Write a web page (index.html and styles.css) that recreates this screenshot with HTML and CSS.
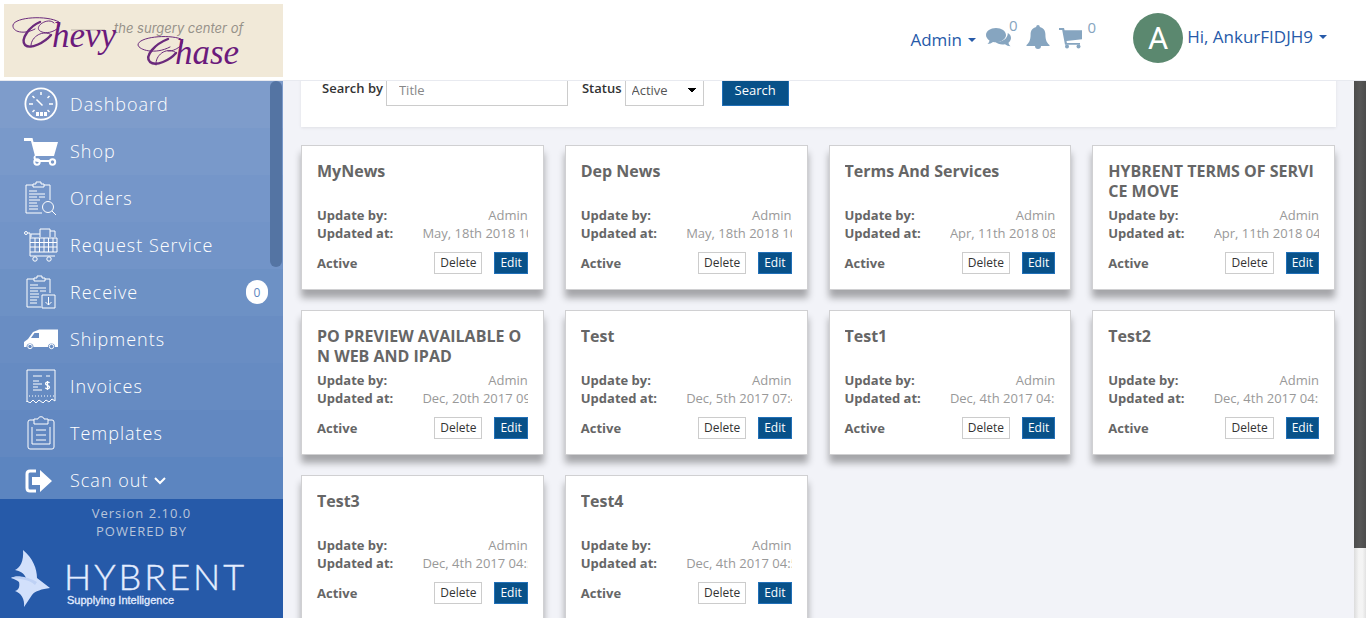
FILE: index.html
```html
<!DOCTYPE html>
<html lang="en">
<head>
<meta charset="utf-8">
<title>Hybrent - News</title>
<link rel="stylesheet" href="styles.css">
</head>
<body>
<div class="app">
  <aside class="sidebar">
    <a class="brand" href="#" aria-label="Chevy Chase">
      <svg class="brand-art" viewBox="0 0 279 73" preserveAspectRatio="none">
        <rect width="279" height="73" fill="#f1e9d8"/>
        <path d="M67 26H101" stroke="#b9b2a6" stroke-width="1"/>
        <text class="brand-small" x="110" y="29">the surgery center of</text>
        <g fill="none" stroke="#6b2a7c" stroke-linecap="round">
          <path d="M31 25C20 31 8 28 9 21C11 13 43 11 55 18C59 23 47 31 38 28C27 24 44 12 50 19" stroke-width="1"/>
          <path d="M36 18C26 22 16 35 21 41C27 46 41 38 47 31" stroke-width="2.4"/>
          <path d="M27 43C26 34 37 26 46 30" stroke-width="1"/>
          <path d="M166 43C151 51 135 46 134 41C134 33 164 30 177 35C183 39 171 48 164 47" stroke-width="1"/>
          <path d="M164 35C151 40 140 52 146 58C152 63 166 56 172 49" stroke-width="2.4"/>
          <path d="M152 61C151 51 162 43 171 48" stroke-width="1"/>
        </g>
        <text class="brand-script" x="48" y="43">hevy</text>
        <text class="brand-script" x="171" y="60">hase</text>
      </svg>
    </a>
    <nav class="menu">
      <a class="item" href="#"><svg class="ico" viewBox="0 0 34 34"><circle cx="17" cy="17" r="15.6" stroke-width="1.8"/><path stroke-width="1.5" d="M17 5v3M5 17h4M25 17h4M8.500 9l2 2M25.500 9l-2 2M8.500 25l2-2M25.500 25l-2-2M12.500 12.500l6 6"/><path class="fill" d="M12 25h3v4h-3zM16 25h3v4h-3zM20 25h3v4h-3z"/></svg><span>Dashboard</span></a>
      <a class="item" href="#"><svg class="ico" viewBox="0 0 34 34"><path class="fill" d="M0 4h8.500l1 4H34l-4 14H11L7 7H0z"/><path stroke-width="2" d="M11 22c-1 2 0 5 3 5h12"/><circle cx="13" cy="28" r="2.700" stroke-width="2"/><circle cx="28.500" cy="28" r="2.700" stroke-width="2"/></svg><span>Shop</span></a>
      <a class="item" href="#"><svg class="ico" viewBox="0 0 34 34"><path d="M9 4H2v28h16M20 4h6v15M9 3h3V1h5v2h3v3H9zM5 10h8M5 13h16M5 16h8M15 16h6M5 19h11M5 22h8M5 25h9M5 28h9"/><circle cx="24" cy="26" r="5.500"/><path d="M28 30l4 4"/></svg><span>Orders</span></a>
      <a class="item" href="#"><svg class="ico" viewBox="0 0 34 34"><circle cx="2" cy="5" r="1.500"/><path d="M4 5h2v23h25M6 10h27v14H6M6 14.500h27M6 19h27M11 10v14M15.500 10v14M20 10v14M24.500 10v14M29 10v14M7 9V6h9M16 9V1h10v8M26 3h5v6"/><circle cx="11" cy="31" r="2.200"/><circle cx="25" cy="31" r="2.200"/></svg><span>Request Service</span></a>
      <a class="item" href="#"><svg class="ico" viewBox="0 0 34 34"><path d="M10 4H3v28h14M21 4h5v14M10 3h3V1h5v2h3v3H10zM6 10h8M6 13h16M6 16h8M16 16h6M6 19h9M6 22h9M6 25h7M6 28h7M18 20h13v13H18zM24.500 22v8M21.500 27l3 3 3-3"/></svg><span>Receive</span><span class="count">0</span></a>
      <a class="item" href="#"><svg class="ico" viewBox="0 0 34 34"><path class="fill" fill-rule="evenodd" d="M15 7.500h19V25h-3a3.500 3.500 0 0 0-7 0H9.500a3.500 3.500 0 0 0-7 0H0v-5l4-3 5-7 5-2zM7 16h8v-5h-4.500z"/><circle cx="6" cy="24.500" r="2.200"/><circle cx="27.500" cy="24.500" r="2.200"/></svg><span>Shipments</span></a>
      <a class="item" href="#"><svg class="ico" viewBox="0 0 34 34"><path d="M3 33V1h28v31l-3-2-3 3-3-2-3 3-4-3-3 3-3-3-3 3-3-2zM9 7h9M22 7h4M9 12h6M9 15h9M9 18h5M9 21h9"/><path stroke-dasharray="1 2" d="M5 27h25"/><path stroke-width="1.300" d="M25.500 14c-1-1.500-4-1-4 .8s4 1.500 4 3.500-3.500 2-4.200.5M23.500 12v9"/></svg><span>Invoices</span></a>
      <a class="item" href="#"><svg class="ico" viewBox="0 0 34 34"><rect x="4" y="4" width="26" height="29" rx="2"/><path class="cover" d="M10 8V3h4c0-3 6-3 6 0h4v5z"/><path d="M8 11v17h18V11M12 14h10M12 19h10M12 24h10"/></svg><span>Templates</span></a>
      <a class="item" href="#"><svg class="ico" viewBox="0 0 34 34"><path stroke-width="3" d="M12 8H6Q3 8 3 11V25Q3 28 6 28H12"/><path class="fill" d="M8 14h8V7l12 11-12 11v-7H8z"/></svg><span>Scan out</span><svg class="chev" viewBox="0 0 12 12"><path d="M1 4l5 5 5-5"/></svg></a>
      <i class="menu-thumb"></i>
    </nav>
    <footer class="side-foot">
      <div>Version 2.10.0</div>
      <div>POWERED BY</div>
      <svg class="hybrent" viewBox="0 0 283 78">
        <path fill="#d2e0fb" d="M23 10C33 18 37 29 37 38L50 48C42 49 35 51 32 55L24 67C25 59 21 53 15 51C19 50 20 46 19 42C17 40 14 39 11 38C15 36 20 36 26 38C24 33 20 31 15 30C20 28 24 21 23 10Z"/>
        <path fill="#bed1f5" d="M11 38C17 35 29 37 37 42L35 45C29 39 20 39 11 38Z"/>
        <text class="word" x="64" y="50">HYBRENT</text>
        <text class="tag" x="67" y="64">Supplying Intelligence</text>
      </svg>
    </footer>
  </aside>
  <div class="page">
    <header class="top">
      <button class="drop" type="button">Admin<i class="caret"></i></button>
      <div class="notes">
        <a href="#" aria-label="Messages"><svg width="26" height="24" viewBox="0 0 26 24"><path d="M10 2C4.500 2 0 5 0 9c0 2.300 1.500 4.200 3.500 5.500C3.300 16 2.500 17 1.500 18c2 0 4-.8 5.500-2 1 .2 2 .3 3 .3 5.500 0 10-3.200 10-7.200S15.500 2 10 2z"/><path d="M21.800 7c2 1 3.200 2.800 3.200 5 0 1.800-1 3.500-2.500 4.700.2 1.500 1 2.500 2 3.500-2 0-4-.8-5.500-2-4 .7-7.500-.2-9.500-2.200 6 .2 12.500-3 12.300-9z"/></svg><sup>0</sup></a>
        <a href="#" aria-label="Alerts"><svg width="24" height="26" viewBox="0 0 24 26"><path d="M12 0c1.100 0 1.800.8 1.800 2 3.600.8 5.600 3.600 5.600 7.200 0 6.300 1.600 8.500 4.100 10.800v1H15a3 3 0 0 1-6 0H.5v-1c2.500-2.300 4.100-4.500 4.100-10.800 0-3.600 2-6.400 5.600-7.200 0-1.200.7-2 1.800-2z"/></svg></a>
        <a href="#" aria-label="Cart"><svg width="26" height="24" viewBox="0 0 26 24"><path d="M1 2h5l.6 2.200H24v9L8.500 15l.4 2H22v1.800H7L4.200 4H1z"/><circle cx="9" cy="20.500" r="2"/><circle cx="20.500" cy="20.500" r="2"/></svg><sup>0</sup></a>
      </div>
      <span class="avatar">A</span>
      <button class="drop user" type="button">Hi, AnkurFIDJH9<i class="caret"></i></button>
    </header>
    <div class="view">
      <main class="content">
        <form class="filter">
          <label for="title">Search by</label><input id="title" type="text" placeholder="Title">
          <label class="gap" for="status">Status</label><select id="status"><option>Active</option></select>
          <button class="btn primary search" type="button">Search</button>
        </form>
        <section class="cards">
          <article class="card"><h2>MyNews</h2><dl><dt>Update by:</dt><dd>Admin</dd><dt>Updated at:</dt><dd>May, 18th 2018 10</dd></dl><div class="acts"><b>Active</b><button class="btn" type="button">Delete</button><button class="btn primary" type="button">Edit</button></div></article>
          <article class="card"><h2>Dep News</h2><dl><dt>Update by:</dt><dd>Admin</dd><dt>Updated at:</dt><dd>May, 18th 2018 10</dd></dl><div class="acts"><b>Active</b><button class="btn" type="button">Delete</button><button class="btn primary" type="button">Edit</button></div></article>
          <article class="card"><h2>Terms And Services</h2><dl><dt>Update by:</dt><dd>Admin</dd><dt>Updated at:</dt><dd>Apr, 11th 2018 08</dd></dl><div class="acts"><b>Active</b><button class="btn" type="button">Delete</button><button class="btn primary" type="button">Edit</button></div></article>
          <article class="card"><h2>HYBRENT TERMS OF SERVICE MOVE</h2><dl><dt>Update by:</dt><dd>Admin</dd><dt>Updated at:</dt><dd>Apr, 11th 2018 04</dd></dl><div class="acts"><b>Active</b><button class="btn" type="button">Delete</button><button class="btn primary" type="button">Edit</button></div></article>
          <article class="card"><h2>PO PREVIEW AVAILABLE ON WEB AND IPAD</h2><dl><dt>Update by:</dt><dd>Admin</dd><dt>Updated at:</dt><dd>Dec, 20th 2017 09</dd></dl><div class="acts"><b>Active</b><button class="btn" type="button">Delete</button><button class="btn primary" type="button">Edit</button></div></article>
          <article class="card"><h2>Test</h2><dl><dt>Update by:</dt><dd>Admin</dd><dt>Updated at:</dt><dd>Dec, 5th 2017 07:4</dd></dl><div class="acts"><b>Active</b><button class="btn" type="button">Delete</button><button class="btn primary" type="button">Edit</button></div></article>
          <article class="card"><h2>Test1</h2><dl><dt>Update by:</dt><dd>Admin</dd><dt>Updated at:</dt><dd>Dec, 4th 2017 04:5</dd></dl><div class="acts"><b>Active</b><button class="btn" type="button">Delete</button><button class="btn primary" type="button">Edit</button></div></article>
          <article class="card"><h2>Test2</h2><dl><dt>Update by:</dt><dd>Admin</dd><dt>Updated at:</dt><dd>Dec, 4th 2017 04:5</dd></dl><div class="acts"><b>Active</b><button class="btn" type="button">Delete</button><button class="btn primary" type="button">Edit</button></div></article>
          <article class="card"><h2>Test3</h2><dl><dt>Update by:</dt><dd>Admin</dd><dt>Updated at:</dt><dd>Dec, 4th 2017 04:5</dd></dl><div class="acts"><b>Active</b><button class="btn" type="button">Delete</button><button class="btn primary" type="button">Edit</button></div></article>
          <article class="card"><h2>Test4</h2><dl><dt>Update by:</dt><dd>Admin</dd><dt>Updated at:</dt><dd>Dec, 4th 2017 04:5</dd></dl><div class="acts"><b>Active</b><button class="btn" type="button">Delete</button><button class="btn primary" type="button">Edit</button></div></article>
        </section>
      </main>
      <div class="track"><i class="track-thumb"></i></div>
    </div>
  </div>
</div>
</body>
</html>
```
FILE: styles.css
```css
* { box-sizing: border-box; }
body { margin: 0; font: 13px/18px "Open Sans", "Noto Sans", sans-serif; color: #333; background: #f2f3f8; }
a { color: inherit; text-decoration: none; }
button, input, select { font: inherit; margin: 0; }
.app { display: flex; height: 100vh; overflow: hidden; }

.sidebar { flex: 0 0 283px; display: flex; flex-direction: column; }
.brand { flex: none; height: 81px; padding: 4px 0 4px 4px; background: #fff; border-bottom: 1px solid #e8eaf0; }
.brand-art { display: block; width: 100%; height: 73px; }
.brand-small { font: italic 13px Inter, "Liberation Sans", sans-serif; fill: #97928a; }
.brand-script { font: italic 35px "Liberation Serif", serif; fill: #6b1a7c; }
.menu { position: relative; flex: 1 1 0; min-height: 0; overflow: hidden; background: #5d86c1; }
.item { display: flex; align-items: center; height: 47px; padding: 0 15px 2px 24px; font-size: 18px; font-weight: 300; letter-spacing: 1px; color: #fff; background: #7e9ccb; }
.item:nth-child(2) { background: #7999ca; }
.item:nth-child(3) { background: #7596c9; }
.item:nth-child(4) { background: #7294c8; }
.item:nth-child(5) { background: #6d91c5; }
.item:nth-child(6) { background: #698dc3; }
.item:nth-child(7) { background: #668bc2; }
.item:nth-child(8) { background: #6288c1; }
.item:nth-child(9) { background: #5c85c0; }
.ico { width: 34px; height: 34px; margin-right: 12px; fill: none; stroke: #fff; stroke-width: 1; }
.ico .fill { fill: #fff; stroke: none; }
.ico .cover { fill: #6288c1; }
.chev { width: 12px; height: 12px; margin-left: 6px; fill: none; stroke: #fff; stroke-width: 2; }
.count { margin-left: auto; width: 22px; height: 24px; border-radius: 11px; background: #fff; color: #5d86c1; font-size: 12px; font-weight: 400; line-height: 26px; letter-spacing: 0; text-align: center; }
.menu-thumb { position: absolute; top: 0; right: 1px; width: 12px; height: 186px; border-radius: 6px; background: #5474a3; }
.side-foot { flex: none; height: 119px; padding-top: 5px; background: #265aa9; color: #b9c5da; text-align: center; letter-spacing: 1px; }
.hybrent { display: block; width: 100%; height: 78px; letter-spacing: 0; }
.word { font: 300 36px Lato, sans-serif; letter-spacing: 3px; fill: #e4edff; stroke: #e4edff; stroke-width: 0.4; }
.tag { font: 11px "Liberation Sans", sans-serif; fill: #e4edff; stroke: #e4edff; stroke-width: 0.3; }

.page { flex: 1; min-width: 0; display: flex; flex-direction: column; }
.top { flex: none; display: flex; align-items: center; justify-content: flex-end; height: 81px; padding: 0 39px 4px 0; background: #fff; border-bottom: 1px solid #e8eaf0; }
.drop { display: flex; align-items: center; padding: 0 0 4px; border: 0; background: none; color: #265aa9; font-size: 17px; line-height: 24px; }
.user { padding-bottom: 2px; }
.top > .drop:first-child { margin-top: 8px; }
.caret { margin-left: 6px; border: 4px solid transparent; border-top-color: #265aa9; border-bottom: 0; }
.notes { display: flex; align-items: center; gap: 8px; margin: 0 37px 0 10px; color: #86a5c0; }
.notes a { display: flex; align-items: center; }
.notes svg { fill: currentColor; }
.notes sup { align-self: flex-start; margin: -10px 0 0 -3px; font-size: 15px; line-height: 18px; }
.notes a:last-child sup { margin: -8px 0 0 4px; }
.avatar { width: 50px; height: 50px; margin-right: 4px; border-radius: 50%; background: #5b886f; color: #fff; font: 31px/51px Roboto, sans-serif; text-align: center; }
.view { flex: 1; min-height: 0; display: flex; }
.content { flex: 1; min-width: 0; overflow: hidden; padding: 0 18px; }
.filter { display: flex; align-items: flex-end; height: 66px; margin: -20px 0 18px; padding: 0 21px 21px; background: #fff; box-shadow: 0 1px 3px rgba(0, 0, 0, .08); color: #333; }
.filter label { margin-right: 3px; padding-bottom: 9px; font-weight: 600; }
.filter input, .filter select { height: 32px; border: 1px solid #ccc; border-radius: 0; background: #fff; color: #555; }
.filter input { width: 182px; padding: 0 12px; }
.filter input::placeholder { color: #888; }
.filter .gap { margin-left: 14px; }
.filter select {
  width: 79px;
  padding: 0 6px;
  appearance: none;
  background:
    linear-gradient(to bottom left, #000 50%, transparent 51%) right 11px center / 4px 4px no-repeat,
    linear-gradient(to bottom right, #000 50%, transparent 51%) right 7px center / 4px 4px no-repeat,
    #fff;
}
.btn { height: 22px; padding: 0 5px; border: 1px solid #ccc; border-radius: 0; background: #fff; color: #333; font-size: 12px; line-height: 18px; }
.primary { background: #085189; border-color: #2170b8; color: #fff; }
.filter .search { height: 32px; margin-left: 18px; padding: 0 12px; font-size: 13px; }

.cards { display: grid; grid-template-columns: repeat(4, minmax(0, 1fr)); gap: 20px 21px; padding-right: 1px; }
.card { padding: 15px; border: 1px solid #d0d0d2; background: #fff; box-shadow: 0 8px 7px rgba(0, 0, 0, .32); color: #666; }
.card h2 { height: 40px; margin: 0 0 5px; overflow: hidden; font-size: 16px; line-height: 20px; font-weight: 700; word-break: break-all; }
.card dl { display: grid; grid-template-columns: 1fr 1fr; margin: 0 0 10px; }
.card dt { font-weight: 700; }
.card dd { margin: 0; min-width: 0; overflow: hidden; white-space: nowrap; text-align: right; color: #999; }
.acts { display: flex; align-items: center; gap: 12px; }
.acts b { margin-right: auto; }

.track { flex: 0 0 12px; background: linear-gradient(90deg, #dcdcdc, #f4f4f4 40%, #f4f4f4 70%, #e2e2e2); }
.track-thumb { display: block; height: 87%; background: linear-gradient(90deg, #4c4c4c, #575757 50%, #4c4c4c); }
```
